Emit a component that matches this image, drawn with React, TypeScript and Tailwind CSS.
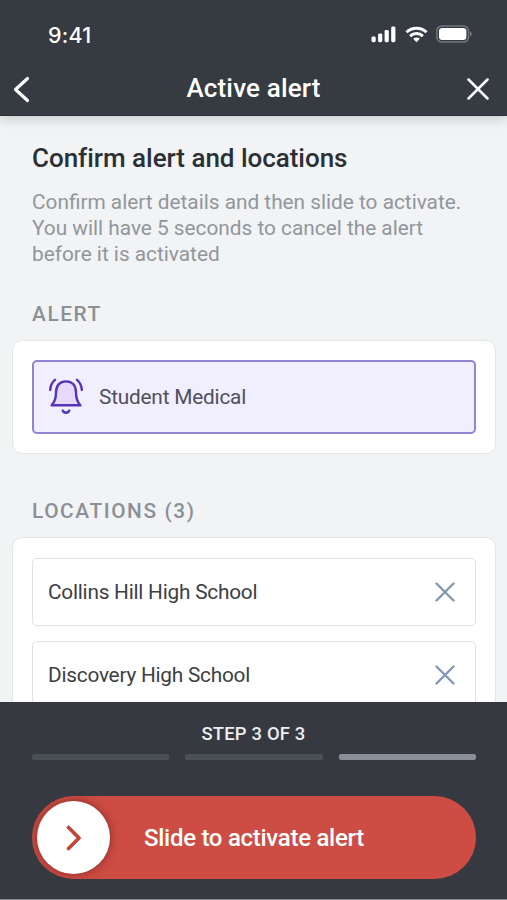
import { type ReactNode } from "react";

const LOCATIONS = ["Collins Hill High School", "Discovery High School"];
const LOCATION_COUNT = 3;
const TOTAL_STEPS = 3;
const CURRENT_STEP = 3;

function StatusIcons() {
  return (
    <div className="flex items-center">
      {/* signal */}
      <svg width="25" height="17" viewBox="0 0 25 17" fill="#fff">
        <rect x="0.5" y="10.5" width="4.2" height="5.7" rx="1.4" />
        <rect x="7.1" y="7.5" width="4.2" height="8.7" rx="1.4" />
        <rect x="13.6" y="3.9" width="4.2" height="12.3" rx="1.4" />
        <rect x="20.2" y="0.6" width="4.2" height="15.6" rx="1.4" />
      </svg>
      {/* wifi */}
      <svg className="ml-[9px]" width="23" height="17" viewBox="0 0 22 17" fill="none" stroke="#fff" strokeWidth="2.9">
        <path d="M1 6.3a14.5 14.5 0 0 1 20 0" />
        <path d="M4.6 10.1a9.3 9.3 0 0 1 12.8 0" />
        <path d="M11 16.2l-3.3-3.4a4.7 4.7 0 0 1 6.6 0z" fill="#fff" stroke="none" />
      </svg>
      {/* battery */}
      <svg className="ml-[8px]" width="37" height="18" viewBox="0 0 37 18">
        <rect x="0.9" y="0.9" width="31.6" height="16.2" rx="5" fill="none" stroke="#74787e" strokeWidth="1.5" />
        <rect x="3" y="2.9" width="27.4" height="12.2" rx="3.3" fill="#fff" />
        <path d="M34 6.3v5.2c1.1-.4 1.8-1.4 1.8-2.6s-.7-2.2-1.8-2.6z" fill="#74787e" />
      </svg>
    </div>
  );
}

function BellIcon() {
  return (
    <svg className="mb-[3px]" width="34" height="36" viewBox="0 0 34 36" fill="none" stroke="#5435b8" strokeWidth="2.4" strokeLinecap="round" strokeLinejoin="round">
      <path d="M2.6 27.3C6 24 7 20 7 14.6 7 7.6 10.6 3.4 17 3.4s10 4.2 10 11.2c0 5.4 1 9.4 4.4 12.7z" fill="#e5dafe" />
      <path d="M13.7 32.5c.6 1.4 1.8 2.2 3.3 2.2s2.7-.8 3.3-2.2" />
      <path d="M6 1.8C3 4.3 1.4 7.6 1.2 12" />
      <path d="M28 1.8c3 2.5 4.6 5.8 4.8 10.2" />
    </svg>
  );
}

function CloseIcon({ size, color, stroke }: { size: number; color: string; stroke: number }) {
  return (
    <svg width={size} height={size} viewBox={`0 0 ${size} ${size}`} fill="none" stroke={color} strokeWidth={stroke} strokeLinecap="round">
      <path d={`M1.5 1.5L${size - 1.5} ${size - 1.5}M${size - 1.5} 1.5L1.5 ${size - 1.5}`} />
    </svg>
  );
}

function SectionTitle({ children }: { children: ReactNode }) {
  return <h3 className="h-[26px] px-5 text-[20.8px] leading-[26px] font-medium tracking-[1.6px] text-[#8a9096]">{children}</h3>;
}

function LocationItem({ name }: { name: string }) {
  return (
    <div className="flex h-[68px] shrink-0 items-center justify-between rounded-[5px] border border-[#dfe1e5] bg-white pr-5 pl-[15px]">
      <span className="pt-[2px] text-[20.8px] tracking-[-0.23px] text-[#3c4045]">{name}</span>
      <button><CloseIcon size={20} color="#8497b4" stroke={2.4} /></button>
    </div>
  );
}

export default function App() {
  return (
    <div className="flex h-[900px] w-[507px] flex-col overflow-hidden bg-[#f1f3f5] font-['Roboto',sans-serif]">
      {/* header */}
      <header className="z-10 h-[116px] shrink-0 border-b border-[#2e3236] bg-[#363a41] text-white shadow-[0_2px_12px_rgba(40,45,50,0.24)]">
        <div className="flex h-[63px] items-end justify-between pr-[34px] pl-[48px]">
          <span className="mb-[14px] font-['Inter',sans-serif] text-[21.5px] leading-[28px] font-medium tracking-[0.2px]">9:41</span>
          <div className="mb-5"><StatusIcons /></div>
        </div>
        <div className="flex h-[52px] items-center justify-between pr-[18px] pl-[13px]">
          <button>
            <svg width="17" height="27" viewBox="0 0 17 27" fill="none" stroke="#fff" strokeWidth="3.1" strokeLinecap="round" strokeLinejoin="round">
              <path d="M14.5 2.5L2.5 13.5l12 11" />
            </svg>
          </button>
          <h1 className="ml-[10px] pb-px text-[26px] font-medium tracking-[0.16px]">Active alert</h1>
          <button><CloseIcon size={22} color="#fff" stroke={2.5} /></button>
        </div>
      </header>

      {/* content */}
      <main className="flex min-h-0 flex-1 flex-col overflow-hidden px-3 pt-[26px]">
        <div className="h-[159px] shrink-0 px-5">
          <h2 className="text-[26px] leading-[32px] font-medium tracking-[-0.03px] text-[#2b3036]">Confirm alert and locations</h2>
          <p className="mt-[15px] text-[20.8px] leading-[26px] text-[#91969c]">
            Confirm alert details and then slide to activate.
            <br />
            You will have 5 seconds to cancel the alert
            <br />
            before it is activated
          </p>
        </div>

        <SectionTitle>ALERT</SectionTitle>
        <section className="mt-[13px] h-[114px] w-[484px] shrink-0 rounded-[10px] border border-[#e4e7ea] bg-white p-[19px]">
          <div className="flex h-[74px] items-center rounded-[5px] border-2 border-[#9482d2] bg-[#f1eefd] pl-[15px]">
            <BellIcon />
            <span className="ml-4 pt-px text-[20.8px] tracking-[-0.2px] text-[#50505e]">Student Medical</span>
          </div>
        </section>

        <div className="mt-11">
          <SectionTitle>LOCATIONS ({LOCATION_COUNT})</SectionTitle>
        </div>
        <section className="mt-[13px] flex w-[484px] shrink-0 flex-col gap-[15px] rounded-t-[10px] border border-b-0 border-[#e4e7ea] bg-white px-[19px] pt-5 pb-[19px]">
          {LOCATIONS.map((name) => (
            <LocationItem key={name} name={name} />
          ))}
        </section>
      </main>

      {/* footer */}
      <footer className="h-[198px] shrink-0 border-b border-[#8d9094] bg-[#363a40] px-8 pt-[18px] text-white">
        <div className="pt-px text-center text-[18.4px] leading-[26px] font-medium tracking-[0.18px] text-[#eceff2]">STEP {CURRENT_STEP} OF {TOTAL_STEPS}</div>
        <div className="mt-[7px] grid h-[6px] w-[444px] grid-cols-3 gap-4">
          {Array.from({ length: TOTAL_STEPS }, (_, i) => (
            <div key={i} className={i + 1 === CURRENT_STEP ? "rounded-[2px] bg-[#8a8e96]" : "rounded-[2px] bg-[#4a5056]"} />
          ))}
        </div>
        {/* slider */}
        <div className="mt-9 flex h-[83px] w-[444px] items-center overflow-hidden rounded-full bg-[#cd4c43] pl-[5px]">
          <div className="flex size-[73px] items-center justify-center rounded-full bg-white shadow-[0_0_9px_rgba(60,10,10,0.5)]">
            <svg width="16" height="26" viewBox="0 0 16 26" fill="none" stroke="#c44439" strokeWidth="3.6" strokeLinecap="round" strokeLinejoin="round">
              <path d="M2.5 2.5L13 13 2.5 23.5" />
            </svg>
          </div>
          <span className="ml-[34px] text-[24px] font-medium tracking-[-0.28px]">Slide to activate alert</span>
        </div>
      </footer>
    </div>
  );
}
